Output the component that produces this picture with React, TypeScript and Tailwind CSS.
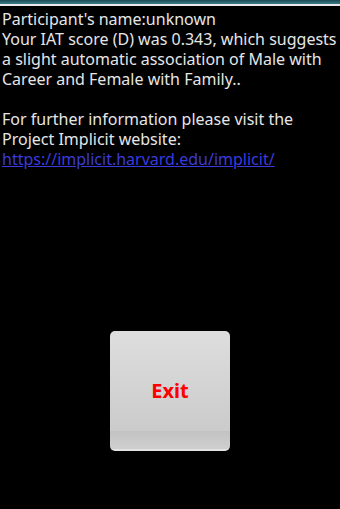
export default function App() {
  return (
    <div className="w-[340px] h-[509px] bg-black flex flex-col overflow-hidden" style={{ fontFamily: '"Noto Sans", "Open Sans", sans-serif' }}>
      {/* status/title strip */}
      <div className="h-[4px] bg-gradient-to-b from-[#1d4a55] to-[#3a7d8a]" />
      <div className="h-[2px] bg-[#e8e8e8]" />

      <div className="px-[2px] pt-[3px] text-[16px] leading-[20px] text-[#e6e6e6]">
        <p>Participant's name:unknown</p>
        <p>Your IAT score (D) was 0.343, which suggests a slight automatic association of Male with Career and Female with Family..</p>
        <p className="h-[20px]" />
        <p>For further information please visit the Project Implicit website:</p>
        <a className="text-[#3b3bdb] underline">https://implicit.harvard.edu/implicit/</a>
      </div>

      <div className="flex justify-center mt-[162px]">
        <button className="w-[120px] h-[120px] rounded-[5px] flex flex-col overflow-hidden">
          <div className="flex-1 bg-gradient-to-b from-[#dedede] to-[#cbcbcb] flex items-center justify-center pt-[20px]">
            <span className="text-[#ff0000] font-bold text-[20px]">Exit</span>
          </div>
          <div className="h-[18px] bg-gradient-to-b from-[#c2c2c2] to-[#cfcfcf]" />
          <div className="h-[2px] bg-[#e2e2e2]" />
        </button>
      </div>
    </div>
  )
}
